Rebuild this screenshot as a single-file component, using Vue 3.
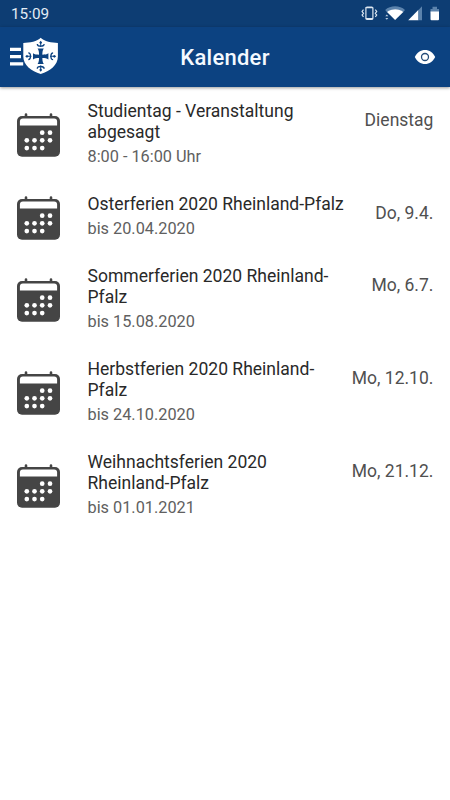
<script setup>
const events = [
  { title: 'Studientag - Veranstaltung abgesagt', detail: '8:00 - 16:00 Uhr', date: 'Dienstag' },
  { title: 'Osterferien 2020 Rheinland-Pfalz', detail: 'bis 20.04.2020', date: 'Do, 9.4.', single: true },
  { title: 'Sommerferien 2020 Rheinland-Pfalz', detail: 'bis 15.08.2020', date: 'Mo, 6.7.' },
  { title: 'Herbstferien 2020 Rheinland-Pfalz', detail: 'bis 24.10.2020', date: 'Mo, 12.10.' },
  { title: 'Weihnachtsferien 2020 Rheinland-Pfalz', detail: 'bis 01.01.2021', date: 'Mo, 21.12.' },
]
const dots = [
  [25.2, 19.7], [33, 19.7],
  [9.8, 27.3], [17.5, 27.3], [25.2, 27.3], [33, 27.3],
  [9.8, 35.1], [17.5, 35.1], [25.2, 35.1],
]
</script>

<template>
  <div class="screen">
    <div class="status">
      <span class="clock">15:09</span>
      <svg class="status-icons" width="80" height="16" viewBox="0 0 80 16">
        <rect x="4.9" y="1" width="7" height="12.3" rx="1.2" fill="none" stroke="#dce6f0" stroke-width="1.2" />
        <path d="M4.700 1.600h7.400M4.700 12.700h7.400" stroke="#dce6f0" stroke-width="1.400" />
        <path d="M2.500 3.700 1.100 5.500l1.400 1.800L1.100 9.100l1.400 1.800M14.300 3.700l1.400 1.800-1.400 1.800 1.400 1.800-1.400 1.800" fill="none" stroke="#dce6f0" stroke-width="1.200" />
        <path d="M24.200 4C29.200-1 39-1 44 4l-2 2.300C37.500 2.500 30.500 2.500 26 6.300z" fill="#5c83ac" />
        <path d="M26 6C30.500 2.300 38 2.300 42.300 6L34.100 14z" fill="#fff" />
        <path d="m24.300 10.200 1.500-1.800 1.500 1.800zM24.300 12l1.500 1.800 1.500-1.800z" fill="#b9cadd" />
        <path d="M57.500 3.800V14.200H47.200z" fill="#fff" />
        <path d="M61 .300v13.900h-3.500V4z" fill="#5c83ac" />
        <path d="M69.500 3h2V.800H76V3h2v3.500h-8.500z" fill="#5c83ac" />
        <path d="M69.500 5.500H78v7.700q0 1-1 1h-6.500q-1 0-1-1z" fill="#fff" />
      </svg>
    </div>
    <header class="toolbar">
      <svg class="brand" width="50" height="40" viewBox="0 0 50 40">
        <path d="M1 12.400h11M1 19.700h11M1 26.900h13.200" stroke="#fff" stroke-width="3.300" />
        <path d="M31.700.8C28.500 4.200 20.500 6 14.300 6V19.600c0 8.500 8 15 17.400 17.400C41 34.600 48.900 28.100 48.900 19.600V6C43 6 35 4.200 31.700.8z" fill="#fff" />
        <g fill="#0c4281" transform="translate(31.700 19.300)">
          <g v-for="angle in [0, 90, 180, 270]" :key="angle" :transform="`rotate(${angle})`">
            <path d="M-1.700 0C-1.600-3.500-1.700-5.700-3.100-7.700H3.100C1.700-5.700 1.600-3.500 1.700 0z" />
            <path d="M0-15.500 1.400-13.800.5-12.200V-9.300H-.5V-12.200L-1.400-13.800z" />
            <path d="M-3.400-12.400Q-3.400-10.200 0-10.200T3.400-12.400" fill="none" stroke="#0c4281" stroke-width="1.300" />
          </g>
        </g>
      </svg>
      <h1 class="title">Kalender</h1>
      <svg class="eye" width="22" height="16" viewBox="0 0 22 16">
        <path d="M.8 8C3 3.400 6.700 1 11 1s8 2.400 10.200 7C19 12.600 15.300 15 11 15S3 12.600.8 8z" fill="#fff" />
        <circle cx="11" cy="8" r="3.500" fill="#fff" stroke="#244b78" stroke-width="1.300" />
      </svg>
    </header>
    <main class="events">
      <article v-for="event in events" :key="event.date" class="event" :class="{ single: event.single }">
        <svg class="calendar" width="44" height="44" viewBox="0 0 44 44">
          <path d="M9 1.600V5M34 1.600V5" stroke="#454545" stroke-width="2.600" stroke-linecap="round" />
          <rect x="0" y="3" width="43" height="40.700" rx="5" fill="#454545" />
          <path d="M2.900 12.600V8.500q0-3 3-3h31.200q3 0 3 3v4.100z" fill="#fff" />
          <circle v-for="dot in dots" :key="dot.join()" :cx="dot[0]" :cy="dot[1]" r="2.350" fill="#fff" />
        </svg>
        <div class="body">
          <h2 class="name">{{ event.title }}</h2>
          <p class="detail">{{ event.detail }}</p>
        </div>
        <time class="date">{{ event.date }}</time>
      </article>
    </main>
  </div>
</template>

<style>
body {
  background: #fff;
}
</style>

<style scoped>
.screen {
  width: 450px;
  height: 800px;
  overflow: hidden;
  background: #fff;
  font-family: Roboto, sans-serif;
}
.status {
  display: flex;
  box-sizing: border-box;
  height: 27px;
  padding: 6px 8px 0 11px;
  justify-content: space-between;
  background: #0d3d73;
}
.clock {
  color: #e3ecf5;
  font-size: 15.3px;
  line-height: 16px;
}
.status-icons {
  margin-right: 1px;
}
.toolbar {
  display: grid;
  grid-template-columns: 60px 1fr 60px;
  box-sizing: border-box;
  height: 60px;
  padding: 0 14px 0 9px;
  align-items: center;
  background: #0c4281;
  box-shadow: 0 1px 3px rgba(0, 0, 0, .4);
}
.title {
  margin: 1px 0 0 5px;
  color: #f4f9ff;
  text-align: center;
  font-size: 22px;
  font-weight: 500;
  letter-spacing: .25px;
  line-height: 28px;
}
.eye {
  justify-self: end;
}
.events {
  padding-top: 2px;
}
.event {
  display: flex;
  box-sizing: border-box;
  height: 93px;
  padding: 0 16.6px 0 17px;
}
.single {
  height: 72px;
}
.calendar {
  flex: none;
  align-self: center;
  margin-bottom: 1px;
}
.body {
  flex: none;
  width: 260px;
  margin-left: 26.5px;
  padding-top: 12px;
}
.name {
  margin: 0;
  color: #292929;
  font-size: 17.55px;
  font-weight: 400;
  line-height: 21px;
}
.detail {
  margin: 3px 0 0;
  color: #606060;
  font-size: 16.3px;
  line-height: 21px;
}
.date {
  margin-left: auto;
  padding-top: 21px;
  color: #505050;
  font-size: 17.5px;
  line-height: 21px;
  white-space: nowrap;
}
</style>
